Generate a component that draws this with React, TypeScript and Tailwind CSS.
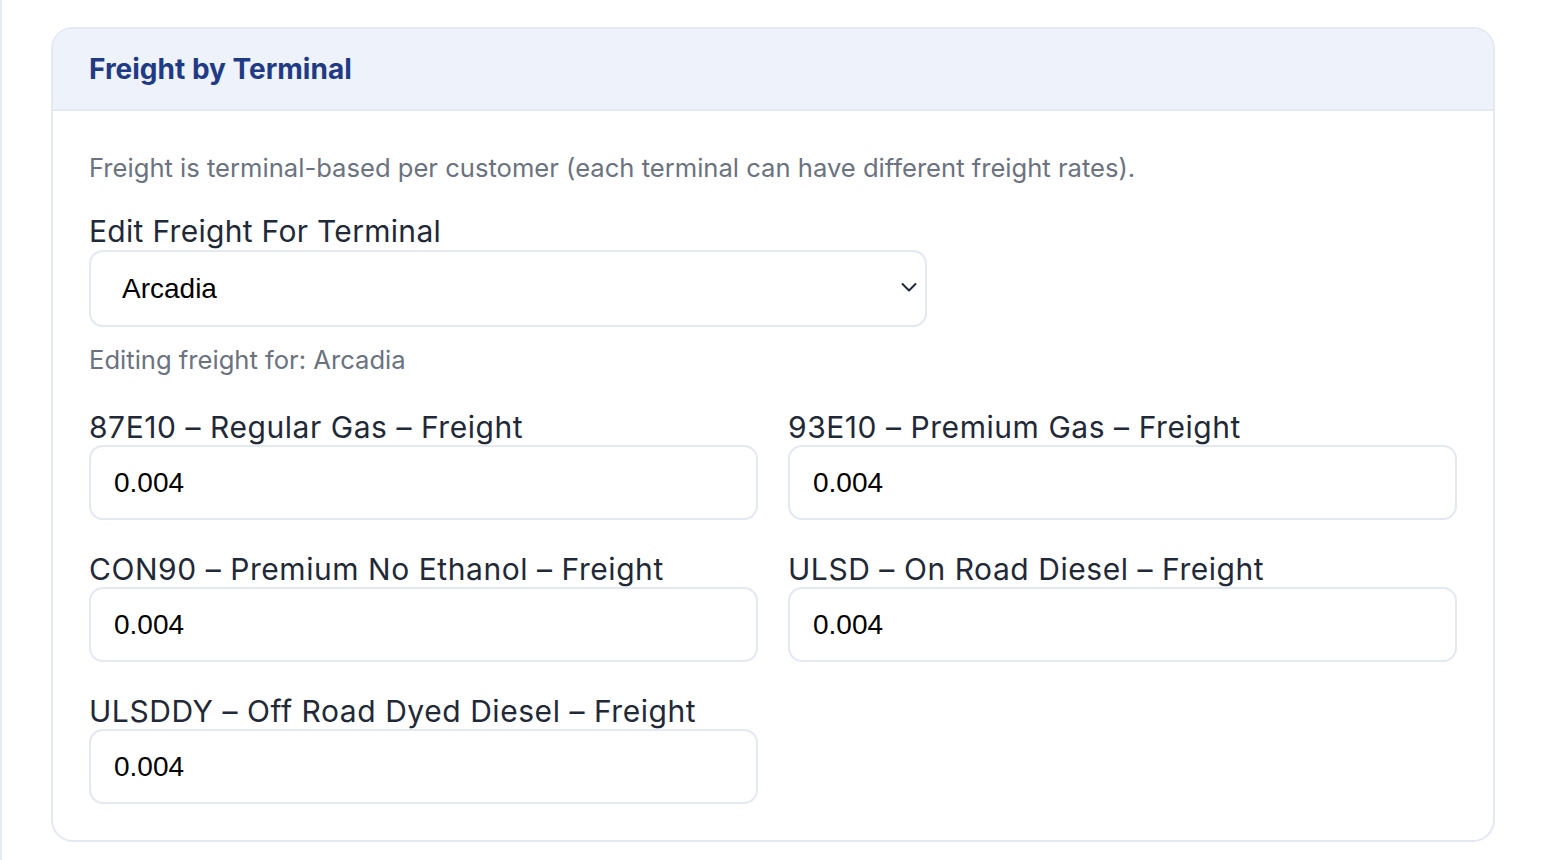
import React from "react";

const fields = [
  "87E10 – Regular Gas – Freight",
  "93E10 – Premium Gas – Freight",
  "CON90 – Premium No Ethanol – Freight",
  "ULSD – On Road Diesel – Freight",
  "ULSDDY – Off Road Dyed Diesel – Freight",
];

const inter = { fontFamily: "Inter, 'Noto Sans', sans-serif" };
const arial = { fontFamily: "'Liberation Sans', Arial, sans-serif" };

export default function App() {
  return (
    <div className="min-h-[860px] w-[1544px] bg-white border-l-[2px] border-[#e5e9f2] pl-[49px] pt-[27px] pr-[49px]" style={inter}>
      <div className="rounded-[22px] border-[2px] border-[#e3e8f1] bg-white overflow-hidden">
        <div className="h-[82px] bg-[#eef2fa] border-b-[2px] border-[#e3e8f1] flex items-center px-[36px]">
          <h2 className="text-[28px] font-bold text-[#1f3b85] leading-none">Freight by Terminal</h2>
        </div>
        <div className="px-[36px] pt-[39px] pb-[36px]">
          <p className="text-[25.6px] leading-[36px] text-[#6b7280]">
            Freight is terminal-based per customer (each terminal can have different freight rates).
          </p>
          <label className="block mt-[28px] text-[30px] leading-[34px] tracking-[0.3px] text-[#1f2937]">Edit Freight For Terminal</label>
          <div className="relative mt-[2px] w-[838px]">
            <select
              className="appearance-none w-full h-[77px] rounded-[14px] border-[2px] border-[#e3e8f1] bg-white pl-[31px] text-[28px] text-black outline-none"
              style={arial}
              defaultValue="Arcadia"
            >
              <option>Arcadia</option>
            </select>
            <svg
              className="absolute right-[10px] top-[32px] pointer-events-none"
              width="16"
              height="11"
              viewBox="0 0 16 11"
              fill="none"
            >
              <path d="M1.5 2 L8 8.5 L14.5 2" stroke="#1f2937" strokeWidth="2" strokeLinecap="round" strokeLinejoin="round" />
            </svg>
          </div>
          <p className="mt-[15px] text-[25.6px] leading-[36px] text-[#6b7280]">Editing freight for: Arcadia</p>
          <div className="mt-[32px] grid grid-cols-2 gap-x-[30px] gap-y-[32px]">
            {fields.map((f) => (
              <div key={f}>
                <label className="block text-[30px] leading-[34px] tracking-[0.55px] text-[#1f2937]">{f}</label>
                <input
                  className="mt-[1px] block w-full h-[75px] rounded-[14px] border-[2px] border-[#e3e8f1] bg-white px-[23px] text-[28px] text-black outline-none"
                  style={arial}
                  defaultValue="0.004"
                />
              </div>
            ))}
          </div>
        </div>
      </div>
    </div>
  );
}
